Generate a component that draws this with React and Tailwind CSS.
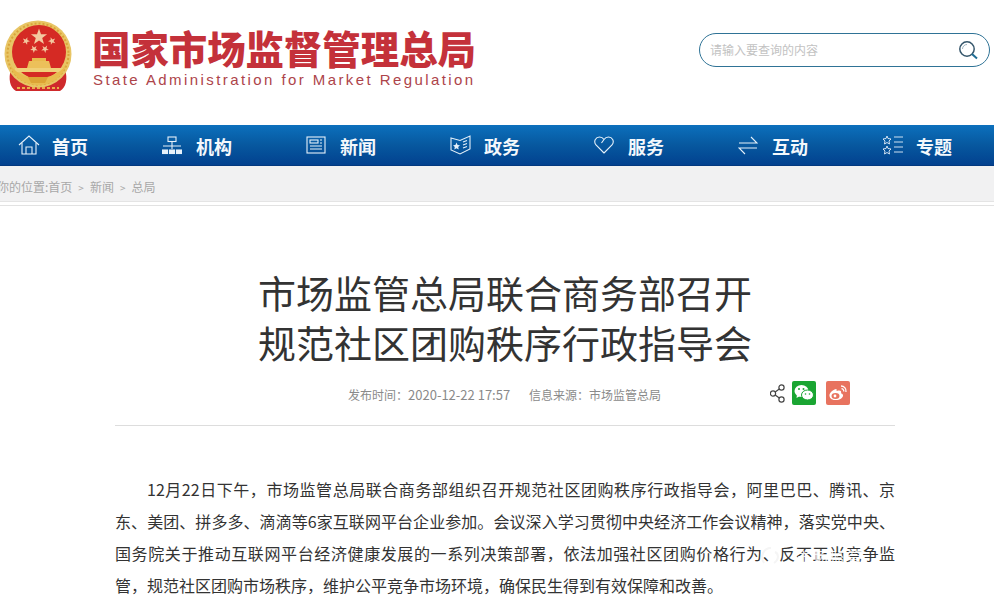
import React from "react";

const Star = ({ x, y, r, fill = "#f3c9a0", rot = 0 }) => {
  const pts = [];
  for (let i = 0; i < 10; i++) {
    const rad = i % 2 === 0 ? r : r * 0.4;
    const a = ((-90 + rot + i * 36) * Math.PI) / 180;
    pts.push(`${(x + rad * Math.cos(a)).toFixed(2)},${(y + rad * Math.sin(a)).toFixed(2)}`);
  }
  return <polygon points={pts.join(" ")} fill={fill} />;
};

const Emblem = () => (
  <svg width="72" height="72" viewBox="0 0 72 72" className="shrink-0">
    <path d="M9 50 C6 58 8 68 14 71 L58 71 C64 68 66 58 63 50 L54 54 L18 54 Z" fill="#cf2a2c" />
    <path d="M15 68 H57" stroke="#e9b04a" strokeWidth="2" strokeDasharray="3 2" />
    <circle cx="36" cy="34" r="33.5" fill="#e8c565" />
    <circle cx="36" cy="34" r="30.5" fill="none" stroke="#d9a53a" strokeWidth="2" strokeDasharray="2 2" />
    <circle cx="37" cy="32" r="27" fill="#d52a24" />
    <Star x={37} y={17} r={8.5} />
    <Star x={24} y={21} r={4} rot={20} />
    <Star x={50} y={21} r={4} rot={-20} />
    <Star x={32} y={29} r={4} rot={40} />
    <Star x={43} y={29} r={4} rot={-40} />
    <rect x="30" y="38" width="14" height="3" fill="#e9b94d" />
    <path d="M27 41 L47 41 L49 48 L25 48 Z" fill="#ecc05a" />
    <rect x="13" y="48" width="48" height="4" fill="#f0d078" />
    <path d="M8 44 C11 58 23 65 36 65 C49 65 61 58 64 44 C60 52 49 58 36 58 C23 58 12 52 8 44 Z" fill="#e8bc4e" />
    <path d="M26 57 H46 L43 63 H29 Z" fill="#dca435" />
  </svg>
);

const iconProps = { fill: "none", stroke: "#e6f1fa", strokeWidth: 1.1 };

const icons = {
  home: (
    <svg width="22" height="20" viewBox="0 0 22 20" {...iconProps}>
      <path d="M1 10 L11 1 L21 10" />
      <path d="M4 8 V19 H18 V8" />
      <path d="M8 19 V12 H14 V19" />
    </svg>
  ),
  org: (
    <svg width="20" height="19" viewBox="0 0 20 19" {...iconProps}>
      <rect x="6" y="1" width="8" height="4.5" />
      <path d="M1 10 H19 M10 6 V13" />
      <rect x="0.5" y="14" width="5" height="3.5" fill="#e6f1fa" />
      <rect x="7.5" y="14" width="5" height="3.5" fill="#e6f1fa" />
      <rect x="14.5" y="14" width="5" height="3.5" fill="#e6f1fa" />
    </svg>
  ),
  news: (
    <svg width="20" height="18" viewBox="0 0 20 18" {...iconProps}>
      <rect x="1" y="1" width="18" height="16" />
      <rect x="4" y="4" width="8" height="3" />
      <path d="M14 4 H16 M14 7 H16 M4 10 H16 M4 13 H16" />
    </svg>
  ),
  gov: (
    <svg width="21" height="20" viewBox="0 0 21 20" {...iconProps}>
      <path d="M1 3 L10 5.5 L20 1 V14 L10 19 L1 15 Z" />
      <path d="M13 7 L17 5.5 M13 10 L17 8.5 M13 13 L17 11.5" />
      <path d="M6.5 7.5 L7.6 10 L10 10.3 L8.2 12 L8.7 14.4 L6.5 13.2 L4.3 14.4 L4.8 12 L3 10.3 L5.4 10 Z" fill="#e6f1fa" stroke="none" />
    </svg>
  ),
  heart: (
    <svg width="20" height="18" viewBox="0 0 20 18" {...iconProps}>
      <path d="M10 17 L2 9 C-1 5 2 1 5.5 1 C7.5 1 9 2 10 3.5 L7.5 7 M10 17 L18 9 C21 5 18 1 14.5 1 C12.5 1 11 2 10 3.5" />
    </svg>
  ),
  swap: (
    <svg width="20" height="19" viewBox="0 0 20 19" {...iconProps}>
      <path d="M1 7 H19 L13 1" />
      <path d="M19 12 H1 L7 18" />
    </svg>
  ),
  list: (
    <svg width="21" height="20" viewBox="0 0 21 20" {...iconProps} strokeWidth="0.9">
      <path d="M5 1 L6 3.5 L9 4 L7 6 L7.5 9 L5 7.5 L2.5 9 L3 6 L1 4 L4 3.5 Z" />
      <path d="M5 11 L6 13.5 L9 14 L7 16 L7.5 19 L5 17.5 L2.5 19 L3 16 L1 14 L4 13.5 Z" />
      <path d="M12 2 H21 M12 7 H21 M12 12 H21 M12 17 H21" />
    </svg>
  ),
};

const nav = [
  ["home", "首页"],
  ["org", "机构"],
  ["news", "新闻"],
  ["gov", "政务"],
  ["heart", "服务"],
  ["swap", "互动"],
  ["list", "专题"],
];

export default function App() {
  return (
    <div
      className="w-[994px] h-[604px] overflow-hidden bg-white relative"
      style={{ fontFamily: '"Noto Sans CJK SC", "Liberation Sans", sans-serif' }}
    >
      <header className="h-[125px] flex items-start">
        <div className="flex items-start pl-[2px] pt-[20px] w-[690px]">
          <Emblem />
          <div className="ml-[18px] pt-[7px]">
            <div className="text-[38.4px] leading-[40px] font-black text-[#c4313a] whitespace-nowrap">
              国家市场监督管理总局
            </div>
            <div
              className="text-[15px] leading-[18px] text-[#ad444a] tracking-[2.42px] whitespace-nowrap ml-[1px] mt-[4px]"
              style={{ fontFamily: '"Liberation Sans", sans-serif' }}
            >
              State Administration for Market Regulation
            </div>
          </div>
        </div>
        <div className="mt-[33px] ml-[9px] w-[291px] h-[34px] rounded-[17px] border border-[#2f7396] flex items-center justify-between pl-[10px] pr-[11px]">
          <span className="text-[12px] text-[#c2c2c2]">请输入要查询的内容</span>
          <svg width="20" height="20" viewBox="0 0 20 20" fill="none">
            <circle cx="9" cy="9" r="7.2" stroke="#35566b" strokeWidth="1.5" />
            <path d="M14 14 L19 18.5" stroke="#1f6d94" strokeWidth="2" />
            <path d="M4.5 9 A4.5 4.5 0 0 1 9 4.5" stroke="#9fb4c0" strokeWidth="1" />
          </svg>
        </div>
      </header>

      <nav className="h-[41px] flex bg-gradient-to-b from-[#0c70bd] via-[#07589f] to-[#03418f] border-b border-[#03397f]">
        {nav.map(([icon, label]) => (
          <div key={label} className="w-[144px] shrink-0 flex items-center pl-[18px]">
            <div className="w-[34px] flex items-center shrink-0">{icons[icon]}</div>
            <span className="text-[18px] font-bold text-[#f4f8fc] leading-none pt-[2px]">{label}</span>
          </div>
        ))}
      </nav>

      <div className="h-[36px] bg-[#f1f1f2] flex items-center border-b border-[#e4e4e4] text-[12px] text-[#a8a8a8] whitespace-nowrap pt-[7px]">
        <span className="-ml-[3px]">你的位置:首页</span>
        <span className="mx-[6px] text-[10px]">&gt;</span>
        <span>新闻</span>
        <span className="mx-[6px] text-[10px]">&gt;</span>
        <span>总局</span>
      </div>
      <div className="h-[4px] border-b border-[#e2e2e2]" />

      <main className="ml-[115px] w-[780px]">
        <h1 className="pt-[61px] text-center text-[38px] leading-[50px] font-normal text-[#333333]">
          市场监管总局联合商务部召开
          <br />
          规范社区团购秩序行政指导会
        </h1>
        <div className="h-[59px] border-b border-[#dddddd] flex items-start pt-[14px]">
          <div className="flex items-center h-[24px] ml-[233px] text-[12px] text-[#8a8a8a] whitespace-nowrap">
            <span className="w-[181px] mt-[4px]">
              发布时间：<span className="text-[13px]">2020-12-22 17:57</span>
            </span>
            <span className="w-[241px] mt-[4px]">信息来源：市场监管总局</span>
            <svg width="16" height="19" viewBox="0 0 16 19" fill="none" stroke="#444" strokeWidth="1.2" className="shrink-0">
              <circle cx="11.5" cy="3.5" r="2.6" />
              <circle cx="3" cy="9.5" r="2.6" />
              <circle cx="11.5" cy="15.5" r="2.6" />
              <path d="M5.2 8 L9.3 5 M5.2 11 L9.3 14" />
            </svg>
            <div className="ml-[6px] w-[24px] h-[24px] rounded-[2px] bg-[#1aa532] flex items-center justify-center shrink-0">
              <svg width="20" height="18" viewBox="0 0 20 18">
                <ellipse cx="7.5" cy="7" rx="7" ry="6" fill="#fff" />
                <path d="M3 11 L2.5 14 L6 12 Z" fill="#fff" />
                <ellipse cx="13.5" cy="11" rx="6" ry="5" fill="#fff" stroke="#1aa532" strokeWidth="1" />
                <circle cx="5" cy="5" r="1" fill="#1aa532" />
                <circle cx="9.5" cy="5" r="1" fill="#1aa532" />
                <circle cx="11.5" cy="10" r=".8" fill="#1aa532" />
                <circle cx="15.5" cy="10" r=".8" fill="#1aa532" />
              </svg>
            </div>
            <div className="ml-[10px] w-[24px] h-[24px] rounded-[2px] bg-[#e8735f] flex items-center justify-center shrink-0">
              <svg width="20" height="18" viewBox="0 0 20 18" fill="none">
                <path d="M8 5 C4 6 1 9.5 1.5 12 C2 15.5 6 16.5 9.5 16 C13 15.5 15.5 13 15 11 C14.7 9.7 13.5 9.5 13 9.2 C13.6 7.5 13 6.3 10.5 6.5 L8.5 7 C8.8 5.8 8.8 5 8 5 Z" fill="#fff" />
                <ellipse cx="7.5" cy="12" rx="4" ry="3" fill="#e8735f" />
                <circle cx="7" cy="12" r="1.4" fill="#fff" />
                <path d="M13 2 C16 2 18.5 4.5 18 8 M13.5 4.7 C15 4.7 16 6 15.8 7.5" stroke="#fff" strokeWidth="1.3" />
              </svg>
            </div>
          </div>
        </div>
        <p className="mt-[47px] text-[16px] leading-[32px] text-[#333333] text-justify indent-[32px]">
          12月22日下午，市场监管总局联合商务部组织召开规范社区团购秩序行政指导会，阿里巴巴、腾讯、京东、美团、拼多多、滴滴等6家互联网平台企业参加。会议深入学习贯彻中央经济工作会议精神，落实党中央、国务院关于推动互联网平台经济健康发展的一系列决策部署，依法加强社区团购价格行为、反不正当竞争监管，规范社区团购市场秩序，维护公平竞争市场环境，确保民生得到有效保障和改善。
        </p>
      </main>

      <div className="absolute left-[760px] top-[545px] flex items-center gap-[8px] text-[15px] leading-none text-white whitespace-nowrap opacity-90">
        <svg width="28" height="22" viewBox="0 0 28 22" fill="none" stroke="#f4f4f4" strokeWidth="2">
          <path d="M4 18 C0 12 3 3 11 3 M14 18 C20 14 18 8 15 7" />
        </svg>
        <span className="tracking-[2px]">市场监管</span>
      </div>
    </div>
  );
}
